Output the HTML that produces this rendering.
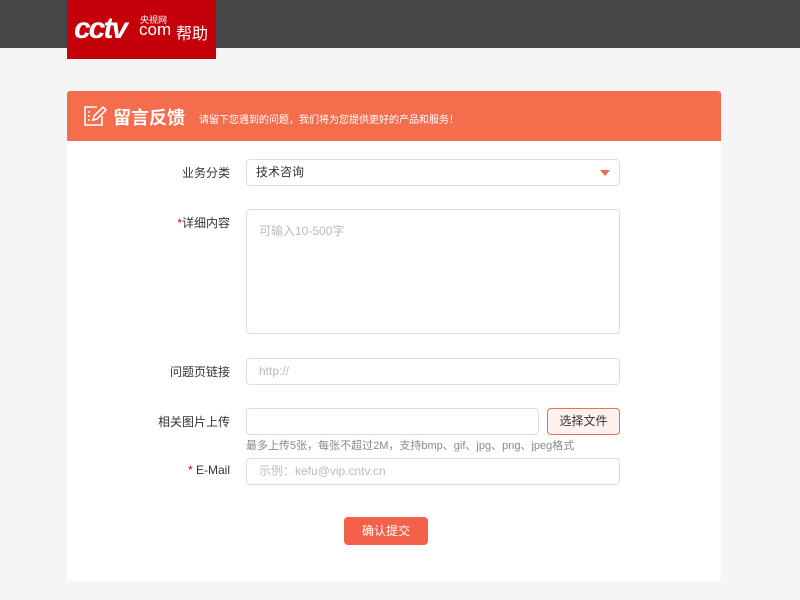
<!DOCTYPE html>
<html><head><meta charset="utf-8"><style>
*{margin:0;padding:0;box-sizing:border-box}
body{width:800px;height:600px;background:#f5f5f5;font-family:"Liberation Sans","Noto Sans CJK SC",sans-serif;position:relative;overflow:hidden;font-size:12px;color:#333}
.top{position:absolute;left:0;top:0;width:800px;height:48px;background:#464646}
.logo{position:absolute;left:67px;top:0;width:149px;height:59px;background:#c4000a;color:#fff}
.card{position:absolute;left:67px;top:91px;width:654px;height:490px;background:#fff;border-radius:3px;overflow:hidden}
.hd{height:50px;background:#f46d4d;color:#fff;position:relative}
.lbl{position:absolute;right:0;font-size:12px;color:#333;text-align:right}
.in{position:absolute;border:1px solid #ddd;border-radius:4px;background:#fff;color:#bbb;font-size:12px;padding-left:12px}
</style></head><body>
<div class="top"></div>
<div class="logo">
<span style="position:absolute;left:7px;top:12px;font:bold 30px 'Liberation Sans';letter-spacing:-2px;font-style:italic">cctv</span>
<span style="position:absolute;left:73px;top:13px;font-size:9px">央视网</span>
<span style="position:absolute;left:72px;top:20px;font-size:17px">com</span>
<span style="position:absolute;left:109px;top:20px;font-size:16px">帮助</span>
</div>
<div class="card">
<div class="hd">
<svg style="position:absolute;left:16px;top:14px" width="24" height="22" viewBox="0 0 24 22" fill="none" stroke="#fff" stroke-width="1.6"><path d="M14 2H2v18h17V11"/><path d="M5 7h2M5 11h2M5 15h2"/><path d="M20 2l3 3-9 9-4 1 1-4z"/></svg>
<span style="position:absolute;left:46px;top:13px;font-size:18px;font-weight:bold">留言反馈</span>
<span style="position:absolute;left:132px;top:20px;font-size:10px">请留下您遇到的问题，我们将为您提供更好的产品和服务！</span>
</div>
</div>
<div style="position:absolute;left:0;top:0;width:230px">
<div class="lbl" style="top:164px">业务分类</div>
<div class="lbl" style="top:214px"><span style="color:#d00">*</span>详细内容</div>
<div class="lbl" style="top:363px">问题页链接</div>
<div class="lbl" style="top:413px">相关图片上传</div>
<div class="lbl" style="top:463px"><span style="color:#d00">*</span> E-Mail</div>
</div>
<div class="in" style="left:246px;top:159px;width:374px;height:27px;color:#333;line-height:25px;padding-left:9px">技术咨询<span style="position:absolute;right:9px;top:10px;border:5px solid transparent;border-top:6px solid #f46d4d;border-bottom:0"></span></div>
<div class="in" style="left:246px;top:209px;width:374px;height:125px;padding-top:12px">可输入10-500字</div>
<div class="in" style="left:246px;top:358px;width:374px;height:27px;line-height:25px">http://</div>
<div class="in" style="left:246px;top:408px;width:293px;height:27px"></div>
<div style="position:absolute;left:547px;top:408px;width:73px;height:27px;border:1px solid #f46d4d;border-radius:4px;background:#fff1ee;text-align:center;line-height:25px">选择文件</div>
<div style="position:absolute;left:246px;top:437px;font-size:11px;color:#888">最多上传5张，每张不超过2M，支持bmp、gif、jpg、png、jpeg格式</div>
<div class="in" style="left:246px;top:458px;width:374px;height:27px;line-height:25px">示例：kefu@vip.cntv.cn</div>
<div style="position:absolute;left:344px;top:517px;width:84px;height:28px;background:#f4614a;border-radius:4px;color:#fff;text-align:center;line-height:28px">确认提交</div>
</body></html>
